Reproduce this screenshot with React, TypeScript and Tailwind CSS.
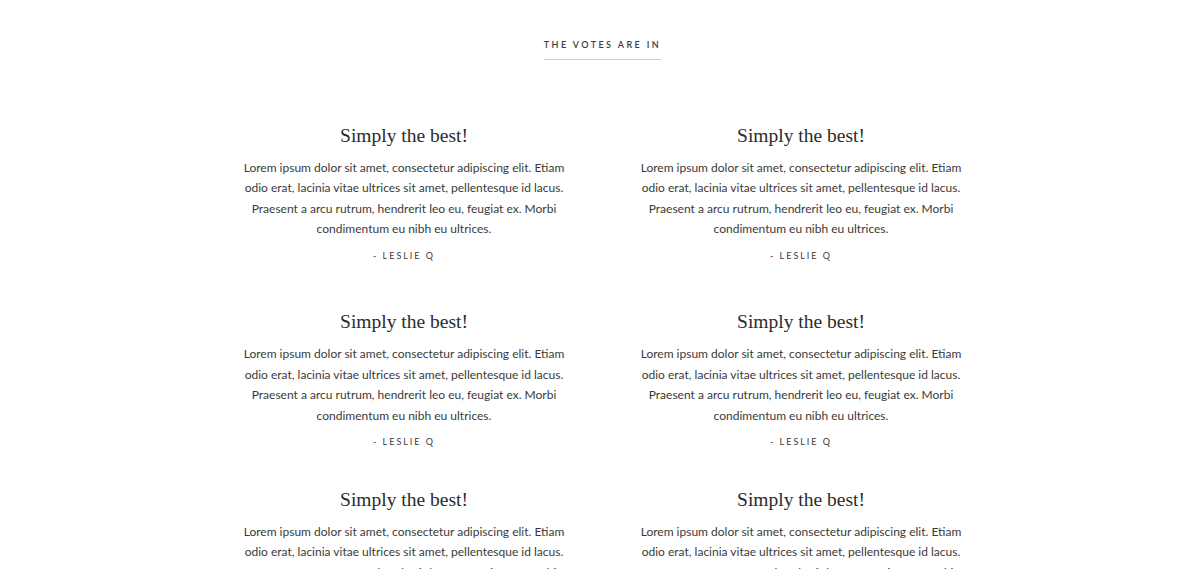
const quote =
  "Lorem ipsum dolor sit amet, consectetur adipiscing elit. Etiam odio erat, lacinia vitae ultrices sit amet, pellentesque id lacus. Praesent a arcu rutrum, hendrerit leo eu, feugiat ex. Morbi condimentum eu nibh eu ultrices.";

// three rows of two testimonials each
const rows = [
  { id: "a", spacing: "mt-[62px]" },
  { id: "b", spacing: "mt-[46px]" },
  { id: "c", spacing: "mt-[37px]" },
];

const Review = ({ title, text, author }: { title: string; text: string; author: string }) => (
  <div className="flex flex-col items-center text-center">
    <h3 className="font-['Liberation_Serif',serif] text-[19.5px] leading-[28px] text-[#2b2b2b]">{title}</h3>
    <p className="mt-[8px] w-[330px] font-['Lato',sans-serif] text-[12px] leading-[20.5px] text-[#3a3a3a]">{text}</p>
    <div className="mt-[9px] font-['Lato',sans-serif] text-[9px] uppercase tracking-[0.22em] text-[#3a3a3a]">
      - {author}
    </div>
  </div>
);

export default function App() {
  return (
    <div className="h-screen overflow-hidden bg-white pl-[5px]">
      <div className="flex flex-col items-center pt-[38px]">
        <h2 className="border-b-[1.5px] border-[#cfcfcf] pb-[7px] font-['Lato',sans-serif] text-[9px] font-semibold uppercase tracking-[0.27em] text-[#3d3d3d]">
          The votes are in
        </h2>
      </div>
      {rows.map((row) => (
        <div key={row.id} className={`mx-auto grid w-[794px] grid-cols-2 ${row.spacing}`}>
          <Review title="Simply the best!" text={quote} author="Leslie Q" />
          <Review title="Simply the best!" text={quote} author="Leslie Q" />
        </div>
      ))}
    </div>
  );
}
